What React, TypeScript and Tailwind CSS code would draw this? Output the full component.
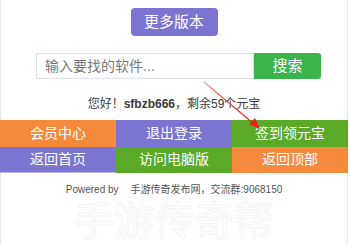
import React from "react";

const font = { fontFamily: '"Liberation Sans", "Noto Sans CJK SC", sans-serif' };

export default function App() {
  return (
    <div
      className="relative w-[350px] h-[245px] overflow-hidden bg-white"
      style={font}
    >
      <div className="w-[348px] h-[245px] border-x border-[#e6e6e6] flex flex-col items-center">
        <div className="mt-[8px] w-[87px] h-[29px] rounded-[4px] bg-[#7b74d1] text-white text-[15px] flex items-center justify-center">
          更多版本
        </div>
        <div className="mt-[17px] flex h-[27px] w-full pl-[35px]">
          <div className="w-[218px] h-full border border-[#dce1ea] bg-white flex items-center pl-[8px] text-[14px] text-[#777]">
            输入要找的软件...
          </div>
          <div className="w-[67px] h-full bg-[#3bb44b] rounded-r-[3px] text-white text-[15px] flex items-center justify-center">
            搜索
          </div>
        </div>
        <div className="mt-[15px] h-[20px] flex items-center text-[12px] text-[#3a3a3a]">
          您好！<b>sfbzb666</b>，剩余59个元宝
        </div>
        <div className="mt-[6px] -mx-px w-[348px] grid grid-cols-[116px_116px_116px] text-white text-[14px]">
          <div className="h-[27px] bg-[#f58a3c] flex items-center justify-center">会员中心</div>
          <div className="h-[27px] bg-[#7b74d1] flex items-center justify-center">退出登录</div>
          <div className="h-[27px] bg-[#5aaa28] flex items-center justify-center">签到领元宝</div>
          <div className="h-[26px] bg-[#7b74d1] flex items-center justify-center border-b border-[#b9b4ea]">返回首页</div>
          <div className="h-[26px] bg-[#5aaa28] flex items-center justify-center">访问电脑版</div>
          <div className="h-[26px] bg-[#f58a3c] flex items-center justify-center">返回顶部</div>
        </div>
        <div className="mt-[7px] h-[20px] flex items-center text-[10px] text-[#555]">
          <span>Powered by</span>
          <span className="ml-[12px]">手游传奇发布网，交流群:9068150</span>
        </div>
        <div className="mt-[-2px] text-[40px] leading-[48px] text-transparent [-webkit-text-stroke:1px_#f4f4f4]">
          手游传奇帮
        </div>
      </div>
      <svg
        className="absolute left-0 top-0 pointer-events-none"
        width="350"
        height="245"
        viewBox="0 0 350 245"
      >
        <defs>
          <linearGradient id="rg" x1="204" y1="82" x2="258" y2="128" gradientUnits="userSpaceOnUse">
            <stop offset="0" stopColor="#f2a0a0" />
            <stop offset="0.4" stopColor="#ec4b45" />
            <stop offset="1" stopColor="#e8201a" />
          </linearGradient>
        </defs>
        <line x1="204" y1="82" x2="254" y2="124" stroke="url(#rg)" strokeWidth="1.3" />
        <polygon points="260,129 249,124.5 255,118" fill="#e8201a" />
      </svg>
    </div>
  );
}
